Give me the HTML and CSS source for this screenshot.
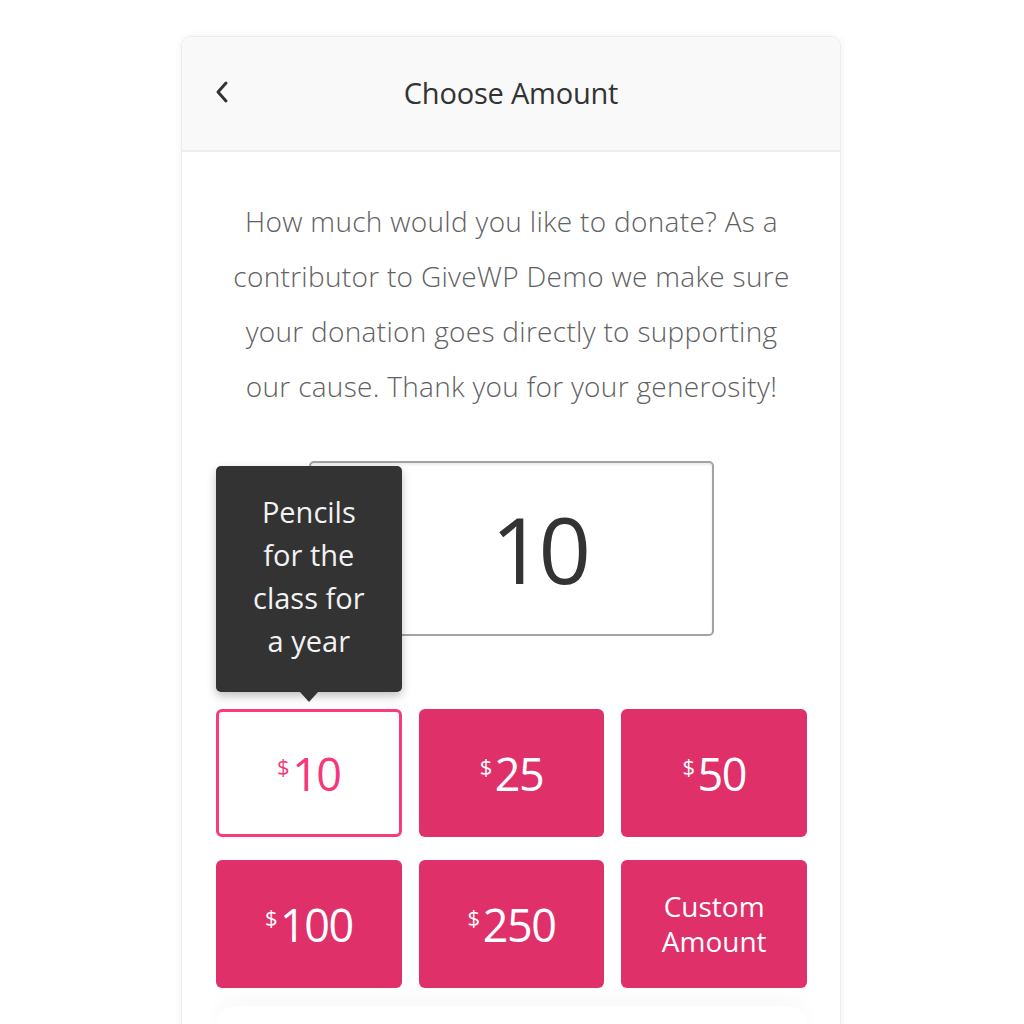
FILE: index.html
```html
<!DOCTYPE html>
<html lang="en">
<head>
  <meta charset="UTF-8">
  <meta name="viewport" content="width=device-width, initial-scale=1.0">
  <title>Choose Amount</title>
  <link rel="stylesheet" href="styles.css">
</head>
<body>
  <div class="card">
    <div class="header">
      <a href="#" class="back">
        <svg width="14" height="24" viewBox="0 0 14 24"><path d="M11 3 L3 12 L11 21" fill="none" stroke="#333" stroke-width="3" stroke-linecap="round" stroke-linejoin="round"/></svg>
      </a>
      <h1>Choose Amount</h1>
    </div>

    <div class="content">
      <p class="intro">How much would you like to donate? As a<br>contributor to GiveWP Demo we make sure<br>your donation goes directly to supporting<br>our cause. Thank you for your generosity!</p>

      <div class="amount">
        <input type="text" value="10">
      </div>

      <div class="levels">
        <button class="level selected">
          <span class="tooltip">Pencils for the class for a year</span>
          <sup>$</sup>10
        </button>
        <button class="level"><sup>$</sup>25</button>
        <button class="level"><sup>$</sup>50</button>
        <button class="level"><sup>$</sup>100</button>
        <button class="level"><sup>$</sup>250</button>
        <button class="level custom">Custom<br>Amount</button>
      </div>

      <div class="next"></div>
    </div>
  </div>
</body>
</html>
```

FILE: styles.css
```css
* {
  box-sizing: border-box;
  margin: 0;
  padding: 0;
}
body {
  font-family: 'Open Sans', 'Liberation Sans', sans-serif;
  background-color: white;
  color: #333;
  padding-top: 36px;
}
.card {
  width: 660px;
  margin: 0 0 0 181px;
  border: 1px solid #ececec;
  border-bottom: none;
  border-radius: 10px 10px 0 0;
  box-shadow: 0 0 8px rgba(0, 0, 0, 0.06);
  overflow: hidden;
}
.header {
  position: relative;
  height: 115px;
  background-color: #f9f9f9;
  border-bottom: 2px solid #ededed;
  display: flex;
  align-items: center;
  justify-content: center;
  padding-bottom: 2px;
}
.back {
  position: absolute;
  left: 33px;
  top: 43px;
  display: block;
}
.header h1 {
  font-size: 29px;
  font-weight: 400;
  color: #333;
  letter-spacing: -0.2px;
}
.content {
  padding: 42px 33px 0 34px;
}
.intro {
  text-align: center;
  font-size: 28px;
  font-weight: 300;
  line-height: 55px;
  color: #616161;
  letter-spacing: 0.3px;
}
.amount {
  width: 405px;
  height: 175px;
  margin: 47px auto 0;
  border: 2px solid #a3a3a3;
  border-radius: 5px;
  box-shadow: inset 0 2px 3px rgba(0, 0, 0, 0.08);
  display: flex;
  align-items: center;
}
.amount input {
  width: 100%;
  min-width: 0;
  border: none;
  background: none;
  outline: none;
  font-family: 'Open Sans', 'Liberation Sans', sans-serif;
  font-size: 92px;
  color: #333;
  text-align: center;
  padding-left: 54px;
  letter-spacing: -5px;
}
.levels {
  margin-top: 73px;
  display: grid;
  grid-template-columns: repeat(3, 1fr);
  column-gap: 17px;
  row-gap: 23px;
}
.level {
  position: relative;
  height: 128px;
  border: none;
  border-radius: 6px;
  background-color: #e0306a;
  color: white;
  font-family: 'Open Sans', 'Liberation Sans', sans-serif;
  font-size: 45px;
  font-weight: 400;
  letter-spacing: -1.5px;
  cursor: pointer;
}
.level sup {
  font-size: 22px;
  vertical-align: 16px;
  margin-right: 4px;
}
.level.selected {
  background-color: white;
  border: 3px solid #f73b7c;
  color: #f23a7b;
}
.level.custom {
  font-size: 28px;
  line-height: 35px;
  letter-spacing: 0;
}
.tooltip {
  position: absolute;
  left: -3px;
  right: -3px;
  bottom: calc(100% + 20px);
  background-color: #333;
  color: #f2f2f2;
  border-radius: 5px;
  padding: 24px 34px 30px;
  font-size: 29px;
  line-height: 43px;
  letter-spacing: 0;
  text-align: center;
  box-shadow: 0 4px 10px rgba(0, 0, 0, 0.25);
}
.tooltip::after {
  content: "";
  position: absolute;
  left: 50%;
  top: 100%;
  margin-left: -9px;
  border: 9px solid transparent;
  border-top: 10px solid #333;
  border-bottom: none;
}
.next {
  margin: 18px 0 0;
  height: 40px;
  box-shadow: 0 -10px 18px rgba(0, 0, 0, 0.025);
  border-radius: 30px;
}
```
